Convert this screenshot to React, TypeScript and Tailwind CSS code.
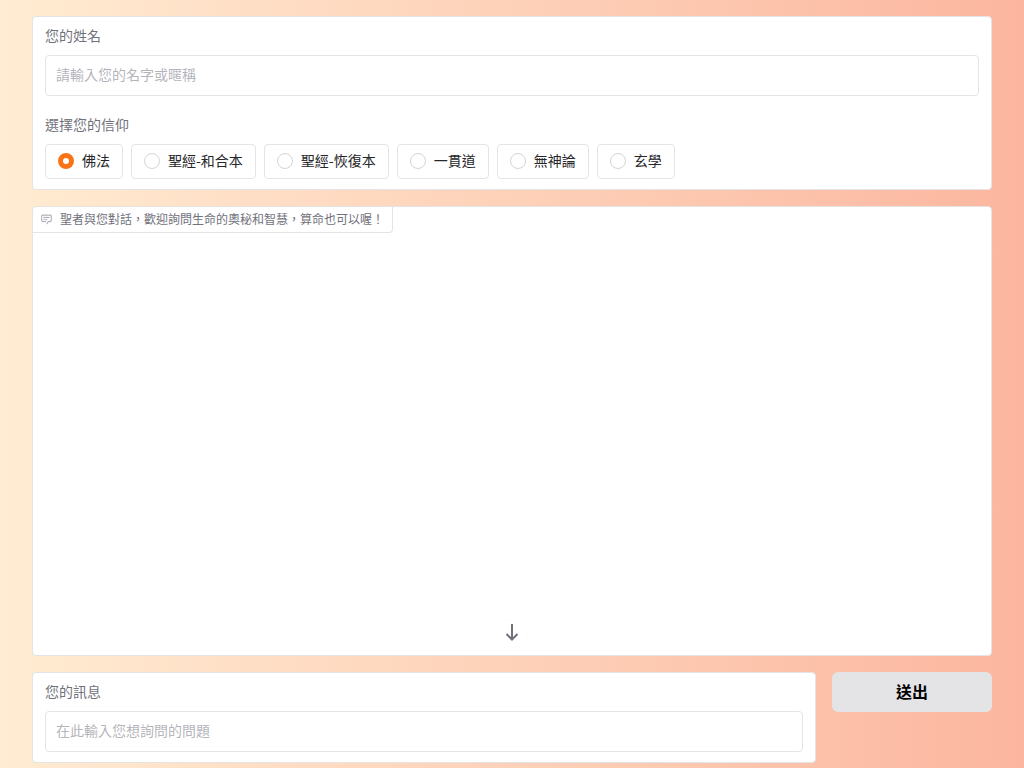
import React, { useState } from 'react';

const FAITHS = ['佛法', '聖經-和合本', '聖經-恢復本', '一貫道', '無神論', '玄學'];

const ChatIcon: React.FC = () => (
  <svg className="w-[11px] h-[11px] text-zinc-400" viewBox="1 2 30 30" fill="currentColor" stroke="currentColor" strokeWidth="0.5" aria-hidden="true">
    <path d="M17.74 30L16 29l4-7h6a2 2 0 0 0 2-2V8a2 2 0 0 0-2-2H6a2 2 0 0 0-2 2v12a2 2 0 0 0 2 2h9v2H6a4 4 0 0 1-4-4V8a4 4 0 0 1 4-4h20a4 4 0 0 1 4 4v12a4 4 0 0 1-4 4h-4.84Z" />
    <path d="M8 10h16v2H8zm0 6h10v2H8z" />
  </svg>
);

const ArrowDownIcon: React.FC = () => (
  <svg className="w-5 h-5" viewBox="0 0 20 20" fill="none" stroke="currentColor" strokeWidth="2" aria-hidden="true">
    <path d="M10 2v15M4.5 12l5.5 5.5 5.5-5.5" />
  </svg>
);

interface TextFieldProps {
  id: string;
  label: string;
  placeholder: string;
  value: string;
  onChange: (value: string) => void;
}

const TextField: React.FC<TextFieldProps> = ({ id, label, placeholder, value, onChange }) => (
  <div className="flex flex-col gap-2">
    <label htmlFor={id} className="h-5 text-sm leading-4 text-zinc-500">
      {label}
    </label>
    <input
      id={id}
      type="text"
      className="w-full h-[41px] px-2.5 pb-1 rounded border border-zinc-200 bg-white text-sm text-zinc-800 placeholder:text-zinc-400/80 focus:outline-none focus:border-orange-300"
      placeholder={placeholder}
      value={value}
      onChange={(e) => onChange(e.target.value)}
    />
  </div>
);

const App: React.FC = () => {
  const [name, setName] = useState('');
  const [faith, setFaith] = useState(FAITHS[0]);
  const [message, setMessage] = useState('');

  return (
    <main className="min-h-screen px-8 pt-4 flex flex-col gap-4 bg-linear-to-r/srgb from-[#ffecd2] to-[#fcb69f] font-['Noto_Sans_CJK_TC',sans-serif]">
      {/* Visitor settings */}
      <section className="flex flex-col gap-5 px-3 py-2.5 rounded border border-zinc-200 bg-white">
        <TextField id="name" label="您的姓名" placeholder="請輸入您的名字或暱稱" value={name} onChange={setName} />

        <fieldset>
          <legend className="h-5 mb-2 text-sm leading-4 text-zinc-500">選擇您的信仰</legend>
          <div className="flex flex-wrap gap-2">
            {FAITHS.map((item) => (
              <label
                key={item}
                className="h-[35px] px-3 pb-0.5 flex items-center gap-2 rounded border border-zinc-200 bg-white text-sm text-zinc-800 cursor-pointer"
              >
                <input
                  type="radio"
                  name="faith"
                  className="w-4 h-4 appearance-none rounded-full border border-zinc-300 bg-white checked:border-5 checked:border-[#f97316]"
                  checked={faith === item}
                  onChange={() => setFaith(item)}
                />
                <span className="pb-0.5">{item}</span>
              </label>
            ))}
          </div>
        </fieldset>
      </section>

      {/* Conversation */}
      <section className="h-[450px] flex flex-col items-start justify-between rounded border border-zinc-200 bg-white">
        <h2 className="h-[26px] px-2 flex items-center gap-2 rounded-br border-r border-b border-zinc-200 text-xs text-zinc-500">
          <ChatIcon />
          <span className="pb-0.5">聖者與您對話，歡迎詢問生命的奧秘和智慧，算命也可以喔！</span>
        </h2>
        <button
          type="button"
          aria-label="捲動到底部"
          className="w-7 h-7 mb-2 pb-0.5 self-center flex items-center justify-center rounded-full bg-white text-zinc-500 shadow-[0_0_2px_rgba(0,0,0,0.04)] cursor-pointer"
        >
          <ArrowDownIcon />
        </button>
      </section>

      {/* Message box */}
      <form className="flex items-start gap-4" onSubmit={(e) => e.preventDefault()}>
        <div className="flex-1 px-3 py-2.5 rounded border border-zinc-200 bg-white">
          <TextField id="message" label="您的訊息" placeholder="在此輸入您想詢問的問題" value={message} onChange={setMessage} />
        </div>
        <button type="submit" className="w-40 h-10 pb-0.5 rounded-md bg-zinc-200 text-base font-bold text-black cursor-pointer">
          送出
        </button>
      </form>
    </main>
  );
};

export default App;
